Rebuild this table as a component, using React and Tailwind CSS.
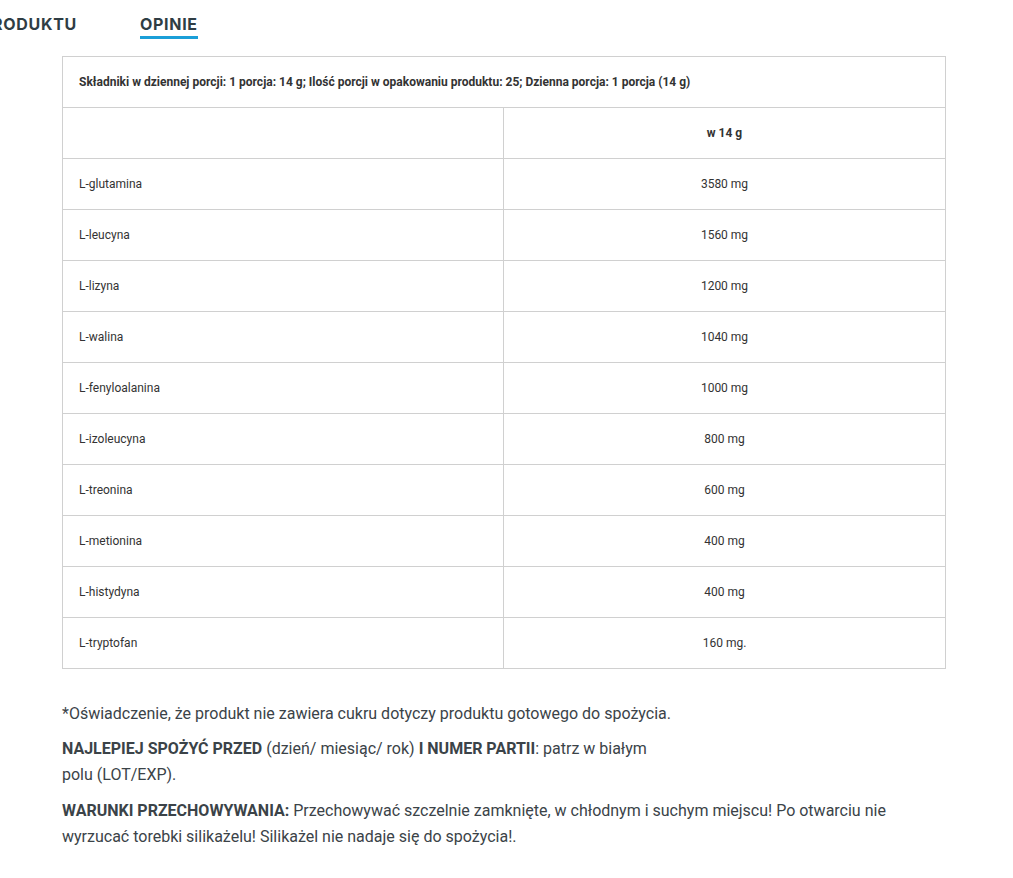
import React from 'react';

const rows = [
  ['L-glutamina', '3580 mg'],
  ['L-leucyna', '1560 mg'],
  ['L-lizyna', '1200 mg'],
  ['L-walina', '1040 mg'],
  ['L-fenyloalanina', '1000 mg'],
  ['L-izoleucyna', '800 mg'],
  ['L-treonina', '600 mg'],
  ['L-metionina', '400 mg'],
  ['L-histydyna', '400 mg'],
  ['L-tryptofan', '160 mg.'],
];

export default function App() {
  return (
    <div className="min-h-[878px] bg-white overflow-hidden font-['Roboto',sans-serif] text-[#333]">
      {/* tabs */}
      <div className="flex items-start gap-[63px] ml-[-19px] pt-[14px] font-['Inter',sans-serif] text-[16px] font-bold text-[#2f3d44] tracking-[0.7px]">
        <div className="leading-[20px]">PRODUKTU</div>
        <div className="flex flex-col">
          <span className="leading-[20px]">OPINIE</span>
          <span className="mt-[2px] h-[3px] bg-[#1b9fd8]"></span>
        </div>
      </div>

      <div className="ml-[62px] mt-[17px] w-[884px]">
        <table className="w-full border-collapse border border-[#d0d0d0] text-[12px] text-[#333]">
          <tbody>
            <tr className="h-[51px]">
              <td colSpan={2} className="border border-[#d0d0d0] px-[16px] font-bold">
                Składniki w dziennej porcji: 1 porcja: 14 g; Ilość porcji w opakowaniu produktu: 25; Dzienna porcja: 1 porcja (14 g)
              </td>
            </tr>
            <tr className="h-[51px]">
              <td className="w-[441px] border border-[#d0d0d0] px-[16px]"></td>
              <td className="border border-[#d0d0d0] px-[16px] text-center font-bold">w 14 g</td>
            </tr>
            {rows.map(([name, val]) => (
              <tr key={name} className="h-[51px]">
                <td className="border border-[#d0d0d0] px-[16px]">{name}</td>
                <td className="border border-[#d0d0d0] px-[16px] text-center">{val}</td>
              </tr>
            ))}
          </tbody>
        </table>

        <div className="mt-[32px] text-[16px] leading-[26px] text-[#3b4348]">
          <p>*Oświadczenie, że produkt nie zawiera cukru dotyczy produktu gotowego do spożycia.</p>
          <p className="mt-[9px] max-w-[600px]">
            <b className="font-bold">NAJLEPIEJ SPOŻYĆ PRZED</b> (dzień/ miesiąc/ rok) <b className="font-bold">I NUMER PARTII</b>: patrz w białym polu (LOT/EXP).
          </p>
          <p className="mt-[10px]">
            <b className="font-bold">WARUNKI PRZECHOWYWANIA:</b> Przechowywać szczelnie zamknięte, w chłodnym i suchym miejscu! Po otwarciu nie wyrzucać torebki silikażelu! Silikażel nie nadaje się do spożycia!.
          </p>
        </div>
      </div>
    </div>
  );
}
